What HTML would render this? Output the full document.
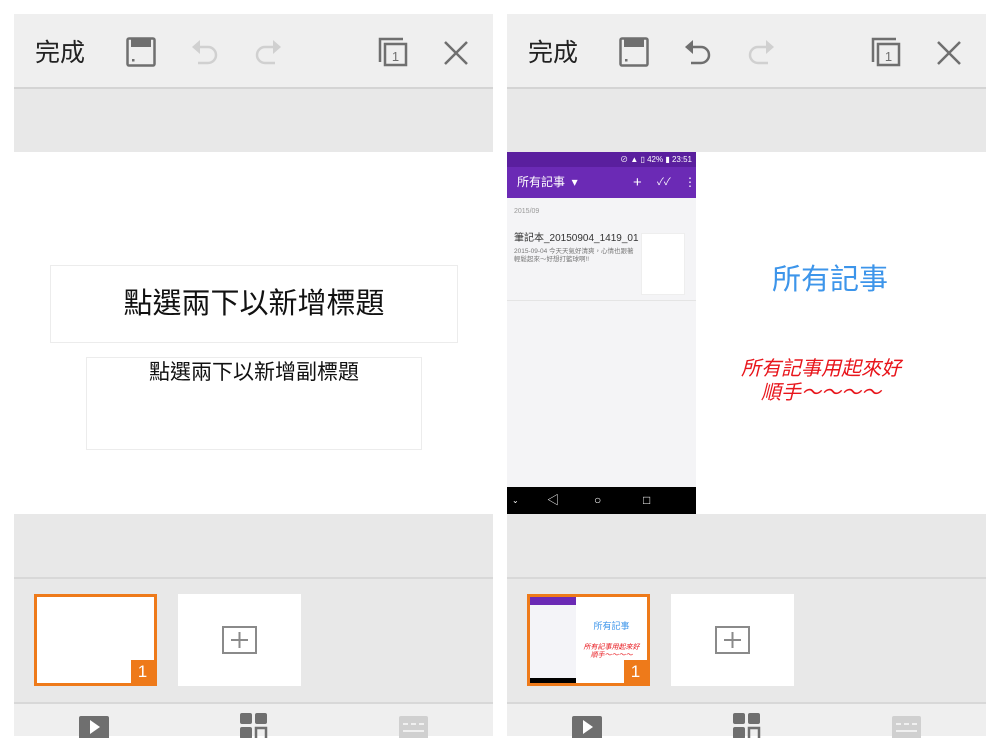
<!DOCTYPE html>
<html><head><meta charset="utf-8"><style>
*{margin:0;padding:0;box-sizing:border-box}
body{width:1000px;height:750px;background:#fff;position:relative;overflow:hidden;font-family:"Liberation Sans","Noto Sans CJK TC",sans-serif}
.p{position:absolute;top:14px;width:479px;height:722px;background:#e8e8e8}
.a{position:absolute}
.tb{left:0;top:0;width:479px;height:75px;background:#efefef;border-bottom:2px solid #d4d4d4}
.slide{left:0;top:138px;width:479px;height:362px;background:#fff}
.sep{left:0;top:563px;width:479px;height:2px;background:#d8d8d8}
.bb{left:0;top:688px;width:479px;height:34px;background:#efefef;border-top:2px solid #d8d8d8}
.done{left:21px;top:19px;font-size:25px;color:#222}
.th{top:580px;width:123px;height:92px;background:#fff}
</style></head><body>

<!-- LEFT -->
<div class="p" style="left:14px">
 <div class="a tb">
  <div class="a done">完成</div>
  <svg class="a" style="left:112px;top:23px" width="30" height="30" viewBox="0 0 30 30"><rect x="1.5" y="1.5" width="27" height="27" rx="1.5" fill="none" stroke="#6f6f6f" stroke-width="2.5"/><rect x="5" y="2" width="20" height="8" fill="#6f6f6f"/><rect x="6" y="22" width="2.5" height="2.5" fill="#6f6f6f"/></svg>
  <svg class="a" style="left:176px;top:24px" width="30" height="28" viewBox="0 0 30 28"><path d="M4 9 H18 A8 8 0 0 1 18 25 H8" fill="none" stroke="#d0d0d0" stroke-width="2.5"/><path d="M10 2 L2 9 L10 16Z" fill="#d0d0d0"/></svg>
  <svg class="a" style="left:239px;top:24px" width="30" height="28" viewBox="0 0 30 28"><path d="M26 9 H12 A8 8 0 0 0 12 25 H22" fill="none" stroke="#d0d0d0" stroke-width="2.5"/><path d="M20 2 L28 9 L20 16Z" fill="#d0d0d0"/></svg>
  <svg class="a" style="left:363px;top:22px" width="32" height="32" viewBox="0 0 32 32"><path d="M3 26 V3 H26" fill="none" stroke="#6f6f6f" stroke-width="2.5"/><rect x="8" y="8" width="21" height="21" fill="none" stroke="#6f6f6f" stroke-width="2.5"/><text x="18.5" y="25" font-size="13" text-anchor="middle" fill="#6f6f6f" font-family="Liberation Sans">1</text></svg>
  <svg class="a" style="left:428px;top:25px" width="28" height="28" viewBox="0 0 28 28"><path d="M3 3 L25 25 M25 3 L3 25" stroke="#6f6f6f" stroke-width="2.5"/></svg>
 </div>
 <div class="a slide">
  <div class="a" style="left:36px;top:113px;width:408px;height:78px;border:1px solid #ececec;text-align:center;font-size:29px;line-height:76px;color:#111">點選兩下以新增標題</div>
  <div class="a" style="left:72px;top:205px;width:336px;height:93px;border:1px solid #ececec;text-align:center;font-size:21px;line-height:26px;padding-top:2px;color:#111">點選兩下以新增副標題</div>
 </div>
 <div class="a sep"></div>
 <div class="a th" style="left:20px;border:3px solid #ee7a1a"><div class="a" style="right:0;bottom:0;width:23px;height:23px;background:#ee7a1a;color:#fff;font-size:17px;text-align:center;line-height:23px">1</div></div>
 <div class="a th" style="left:164px"><svg class="a" style="left:44px;top:32px" width="35" height="28" viewBox="0 0 35 28"><rect x="1" y="1" width="33" height="26" fill="none" stroke="#8a8a8a" stroke-width="2"/><path d="M17.5 6 V22 M9 14 H26" stroke="#8a8a8a" stroke-width="2"/></svg></div>
 <div class="a bb">
  <svg class="a" style="left:65px;top:12px" width="30" height="22"><rect width="30" height="24" rx="2" fill="#6f6f6f"/><path d="M11 4 L21 11 L11 18Z" fill="#fff"/></svg>
  <svg class="a" style="left:226px;top:9px" width="28" height="25"><rect x="0" y="0" width="12" height="11" rx="2" fill="#6f6f6f"/><rect x="15" y="0" width="12" height="11" rx="2" fill="#6f6f6f"/><rect x="0" y="14" width="12" height="12" rx="2" fill="#6f6f6f"/><rect x="16" y="15" width="10" height="12" fill="none" stroke="#6f6f6f" stroke-width="2.5"/></svg>
  <svg class="a" style="left:385px;top:12px" width="29" height="22"><rect width="29" height="24" rx="2" fill="#d0d0d0"/><path d="M4 8 H9 M12 8 H17 M20 8 H25 M4 15 H25" stroke="#f0f0f0" stroke-width="2"/></svg>
 </div>
</div>

<!-- RIGHT -->
<div class="p" style="left:507px">
 <div class="a tb">
  <div class="a done">完成</div>
  <svg class="a" style="left:112px;top:23px" width="30" height="30" viewBox="0 0 30 30"><rect x="1.5" y="1.5" width="27" height="27" rx="1.5" fill="none" stroke="#6f6f6f" stroke-width="2.5"/><rect x="5" y="2" width="20" height="8" fill="#6f6f6f"/><rect x="6" y="22" width="2.5" height="2.5" fill="#6f6f6f"/></svg>
  <svg class="a" style="left:176px;top:24px" width="30" height="28" viewBox="0 0 30 28"><path d="M4 9 H18 A8 8 0 0 1 18 25 H8" fill="none" stroke="#6f6f6f" stroke-width="2.5"/><path d="M10 2 L2 9 L10 16Z" fill="#6f6f6f"/></svg>
  <svg class="a" style="left:239px;top:24px" width="30" height="28" viewBox="0 0 30 28"><path d="M26 9 H12 A8 8 0 0 0 12 25 H22" fill="none" stroke="#d0d0d0" stroke-width="2.5"/><path d="M20 2 L28 9 L20 16Z" fill="#d0d0d0"/></svg>
  <svg class="a" style="left:363px;top:22px" width="32" height="32" viewBox="0 0 32 32"><path d="M3 26 V3 H26" fill="none" stroke="#6f6f6f" stroke-width="2.5"/><rect x="8" y="8" width="21" height="21" fill="none" stroke="#6f6f6f" stroke-width="2.5"/><text x="18.5" y="25" font-size="13" text-anchor="middle" fill="#6f6f6f" font-family="Liberation Sans">1</text></svg>
  <svg class="a" style="left:428px;top:25px" width="28" height="28" viewBox="0 0 28 28"><path d="M3 3 L25 25 M25 3 L3 25" stroke="#6f6f6f" stroke-width="2.5"/></svg>
 </div>
 <div class="a slide">
  <div class="a" style="left:0;top:0;width:189px;height:362px;background:#f4f4f6">
   <div class="a" style="left:0;top:0;width:189px;height:15px;background:#5a1f9e;color:#fff;font-size:8px;line-height:15px;text-align:right;padding-right:4px">⊘ ▲ ▯ 42% ▮ 23:51</div>
   <div class="a" style="left:0;top:15px;width:189px;height:31px;background:#6b2ab5;color:#fff;font-size:12px;line-height:31px;padding-left:10px">所有記事 &nbsp;▾<span style="position:absolute;left:126px;font-size:15px">+</span><span style="position:absolute;left:150px;font-size:10px">✓✓</span><span style="position:absolute;left:177px">⋮</span></div>
   <div class="a" style="left:7px;top:56px;font-size:7px;color:#999">2015/09</div>
   <div class="a" style="left:7px;top:77px;font-size:10px;color:#333">筆記本_20150904_1419_01</div>
   <div class="a" style="left:7px;top:96px;width:125px;font-size:6.5px;line-height:8px;color:#777">2015-09-04 今天天氣好清爽，心情也跟著輕鬆起來～好想打籃球啊!!</div>
   <div class="a" style="left:134px;top:81px;width:44px;height:62px;background:#fff;border:1px solid #eee"></div>
   <div class="a" style="left:0;top:148px;width:189px;height:1px;background:#e4e4e4"></div>
   <div class="a" style="left:0;top:335px;width:189px;height:27px;background:#000;color:#fff;font-size:12px;line-height:27px"><span style="position:absolute;left:5px;font-size:8px">⌄</span><span style="position:absolute;left:40px">◁</span><span style="position:absolute;left:87px">○</span><span style="position:absolute;left:136px">□</span></div>
  </div>
  <div class="a" style="left:178px;top:104px;width:290px;text-align:center;font-size:29px;color:#3d95ea">所有記事</div>
  <div class="a" style="left:189px;top:205px;width:250px;text-align:center;font-size:20px;line-height:24px;color:#e8151b;font-style:italic">所有記事用起來好<br>順手～～～～</div>
 </div>
 <div class="a sep"></div>
 <div class="a th" style="left:20px;border:3px solid #ee7a1a">
  <div class="a" style="left:0;top:0;width:46px;height:86px;background:#f4f4f8"><div style="height:8px;background:#6b2ab5"></div><div class="a" style="bottom:0;width:46px;height:5px;background:#000"></div></div>
  <div class="a" style="left:46px;top:22px;width:71px;text-align:center;font-size:9px;color:#3d95ea">所有記事</div>
  <div class="a" style="left:46px;top:47px;width:71px;text-align:center;font-size:7px;line-height:8px;color:#e8151b;font-style:italic">所有記事用起來好<br>順手～～～～</div>
  <div class="a" style="right:0;bottom:0;width:23px;height:23px;background:#ee7a1a;color:#fff;font-size:17px;text-align:center;line-height:23px">1</div>
 </div>
 <div class="a th" style="left:164px"><svg class="a" style="left:44px;top:32px" width="35" height="28" viewBox="0 0 35 28"><rect x="1" y="1" width="33" height="26" fill="none" stroke="#8a8a8a" stroke-width="2"/><path d="M17.5 6 V22 M9 14 H26" stroke="#8a8a8a" stroke-width="2"/></svg></div>
 <div class="a bb">
  <svg class="a" style="left:65px;top:12px" width="30" height="22"><rect width="30" height="24" rx="2" fill="#6f6f6f"/><path d="M11 4 L21 11 L11 18Z" fill="#fff"/></svg>
  <svg class="a" style="left:226px;top:9px" width="28" height="25"><rect x="0" y="0" width="12" height="11" rx="2" fill="#6f6f6f"/><rect x="15" y="0" width="12" height="11" rx="2" fill="#6f6f6f"/><rect x="0" y="14" width="12" height="12" rx="2" fill="#6f6f6f"/><rect x="16" y="15" width="10" height="12" fill="none" stroke="#6f6f6f" stroke-width="2.5"/></svg>
  <svg class="a" style="left:385px;top:12px" width="29" height="22"><rect width="29" height="24" rx="2" fill="#d0d0d0"/><path d="M4 8 H9 M12 8 H17 M20 8 H25 M4 15 H25" stroke="#f0f0f0" stroke-width="2"/></svg>
 </div>
</div>
</body></html>
